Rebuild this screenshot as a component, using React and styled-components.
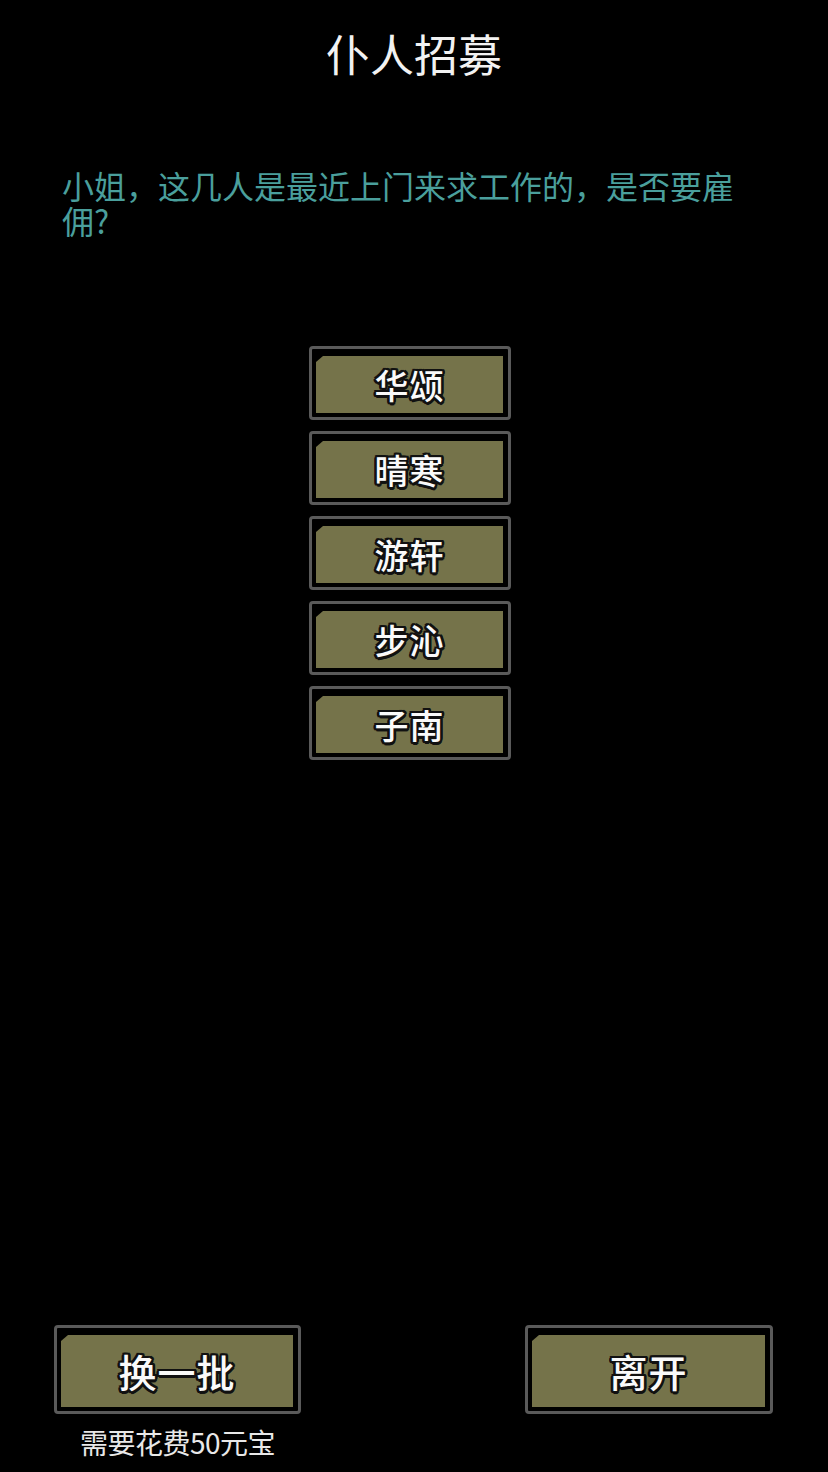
import React from "react";
import styled, { createGlobalStyle } from "styled-components";

const GlobalStyles = createGlobalStyle`
  html, body {
    margin: 0;
    padding: 0;
    background: #000;
  }
  body {
    font-family: "Noto Sans CJK SC", "Noto Sans", sans-serif;
  }
`;

const candidates = ["华颂", "晴寒", "游轩", "步沁", "子南"];

const Screen = styled.div`
  width: 828px;
  height: 1472px;
  background: #000;
  display: flex;
  flex-direction: column;
  box-sizing: border-box;
`;

const Title = styled.h1`
  margin: 0;
  padding-top: 24px;
  height: 58px;
  text-align: center;
  color: #f2f2f2;
  font-size: 44px;
  font-weight: 400;
  line-height: 58px;
`;

const Prompt = styled.p`
  margin: 86px 0 0 62px;
  width: 690px;
  color: #4a9f9c;
  font-size: 32px;
  line-height: 35px;
  font-weight: 400;
`;

const NameList = styled.div`
  margin-top: 108px;
  padding-right: 8px;
  display: flex;
  flex-direction: column;
  align-items: center;
  gap: 11px;
`;

const Frame = styled.button`
  box-sizing: border-box;
  width: ${(p) => p.$w}px;
  height: ${(p) => p.$h}px;
  border: 3px solid #5a5a5a;
  border-radius: 4px;
  background: #000;
  padding: 7px 5px 4px 4px;
  display: flex;
  cursor: pointer;
  font-family: inherit;
`;

const Plate = styled.div`
  flex: 1;
  background: #75734a;
  clip-path: polygon(7px 0, 100% 0, 100% 100%, 0 100%, 0 6px);
  display: flex;
  align-items: center;
  justify-content: center;
`;

const Label = styled.span`
  color: #fafafa;
  font-size: ${(p) => p.$size}px;
  font-weight: 500;
  line-height: 1;
  letter-spacing: 1px;
  text-shadow:
    -2px -2px 0 #111, 2px -2px 0 #111, -2px 2px 0 #111, 2px 2px 0 #111,
    0 -2.5px 0 #111, 0 2.5px 0 #111, -2.5px 0 0 #111, 2.5px 0 0 #111,
    -1px -2.5px 0 #111, 1px 2.5px 0 #111, -2.5px 1px 0 #111, 2.5px -1px 0 #111;
`;

const Footer = styled.div`
  margin-top: auto;
  padding: 0 55px 14px 54px;
  display: flex;
  justify-content: space-between;
  align-items: flex-start;
`;

const ActionColumn = styled.div`
  display: flex;
  flex-direction: column;
  align-items: center;
  gap: 12px;
`;

const CostNote = styled.div`
  color: #e8e8e8;
  font-size: 28px;
  line-height: 32px;
  font-weight: 400;
  letter-spacing: -0.5px;
`;

const PlateButton = ({ w, h, size, children }) => (
  <Frame $w={w} $h={h}>
    <Plate>
      <Label $size={size}>{children}</Label>
    </Plate>
  </Frame>
);

const App = () => {
  return (
    <Screen>
      <GlobalStyles />
      <Title>仆人招募</Title>
      <Prompt>小姐，这几人是最近上门来求工作的，是否要雇佣?</Prompt>
      <NameList>
        {candidates.map((name) => (
          <PlateButton key={name} w={202} h={74} size={34}>
            {name}
          </PlateButton>
        ))}
      </NameList>
      <Footer>
        <ActionColumn>
          <PlateButton w={247} h={89} size={38}>
            换一批
          </PlateButton>
          <CostNote>需要花费50元宝</CostNote>
        </ActionColumn>
        <ActionColumn>
          <PlateButton w={248} h={89} size={38}>
            离开
          </PlateButton>
        </ActionColumn>
      </Footer>
    </Screen>
  );
};

export default App;
